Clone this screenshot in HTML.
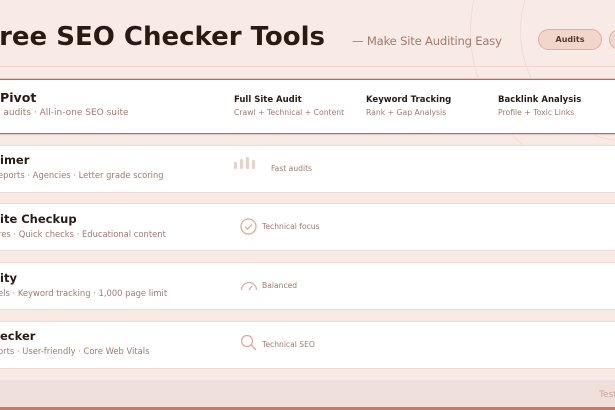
<!DOCTYPE html>
<html><head><style>
body{margin:0;width:615px;height:410px;overflow:hidden;background:#f8ebe6;font-family:"DejaVu Sans","Liberation Sans",sans-serif;position:relative}
.a{position:absolute;white-space:nowrap}
.card{position:absolute;left:-10px;width:640px;background:#fff;border-top:1px solid #efd9d2;border-bottom:1px solid #efd9d2}
.t{font-size:11.5px;font-weight:bold;color:#2a1a14}
.s{font-size:8.4px;color:#a07a6e}
.ct{font-size:8.5px;font-weight:bold;color:#2a1a14}
.cs{font-size:7.7px;color:#a07a6e}
.ic{font-size:7.6px;color:#a07a6e}
</style></head><body>
<div class="a" style="left:470px;top:-120px;width:300px;height:300px;border:1px solid #f0dcd4;border-radius:50%"></div>
<div class="a" style="left:520px;top:-80px;width:220px;height:220px;border:1px solid #f0dcd4;border-radius:50%"></div>
<div class="a" style="left:0;top:66px;width:615px;height:1px;background:#f0d8d0"></div>
<div class="a" style="left:-17px;top:22px;font-size:26px;font-weight:bold;color:#2a1a14">Free SEO Checker Tools</div>
<div class="a" style="left:352px;top:34px;font-size:11.6px;color:#a07a6e;letter-spacing:-0.2px">— Make Site Auditing Easy</div>
<div class="a" style="left:538px;top:29px;width:64px;height:21px;background:#f2d6cc;border:1px solid #dcb0a4;border-radius:11px;box-sizing:border-box;font-size:8px;font-weight:bold;color:#5a3a30;text-align:center;line-height:19px">Audits</div>
<div class="a" style="left:609px;top:29px;width:30px;height:21px;background:#f2d6cc;border:1px solid #dcb0a4;border-radius:11px;box-sizing:border-box"></div>

<div class="a" style="left:0;top:79px;width:615px;height:55px;background:#fff;border-top:1px solid #dd5a4c;border-bottom:1px solid #dd5a4c;box-shadow:0 1px 0 #f2c4bc,0 -1px 0 #f2c4bc;box-sizing:border-box"></div>
<div class="a t" style="left:0;top:90px;font-size:12.6px">Pivot</div>
<div class="a s" style="left:-2px;top:108px;font-size:9px">l audits · All-in-one SEO suite</div>
<div class="a ct" style="left:234px;top:95px">Full Site Audit</div>
<div class="a cs" style="left:234px;top:108px">Crawl + Technical + Content</div>
<div class="a ct" style="left:366px;top:95px">Keyword Tracking</div>
<div class="a cs" style="left:366px;top:108px">Rank + Gap Analysis</div>
<div class="a ct" style="left:498px;top:95px">Backlink Analysis</div>
<div class="a cs" style="left:498px;top:108px">Profile + Toxic Links</div>

<div class="card" style="top:145px;height:46px"></div>
<div class="a t" style="left:0;top:153px">imer</div>
<div class="a s" style="left:-2px;top:170px">eports · Agencies · Letter grade scoring</div>
<svg class="a" style="left:234px;top:156px" width="28" height="16"><g fill="#ead0c8"><rect x="0" y="6" width="3" height="7" rx="1"/><rect x="6" y="3" width="3" height="10" rx="1"/><rect x="12" y="1" width="3" height="12" rx="1"/><rect x="18" y="4" width="3" height="9" rx="1"/></g></svg>
<div class="a ic" style="left:271px;top:164px">Fast audits</div>

<div class="card" style="top:203px;height:46px"></div>
<div class="a t" style="left:0;top:212px">ite Checkup</div>
<div class="a s" style="left:-2px;top:229px">res · Quick checks · Educational content</div>
<svg class="a" style="left:240px;top:218px" width="18" height="18"><circle cx="8.5" cy="8.5" r="7.5" fill="none" stroke="#dca898" stroke-width="1.2"/><path d="M5 8.7l2.5 2.5 4.5-5" fill="none" stroke="#dca898" stroke-width="1.2"/></svg>
<div class="a ic" style="left:262px;top:222px">Technical focus</div>

<div class="card" style="top:262px;height:46px"></div>
<div class="a t" style="left:0;top:271px">ity</div>
<div class="a s" style="left:-2px;top:288px">els · Keyword tracking · 1,000 page limit</div>
<svg class="a" style="left:240px;top:281px" width="18" height="10"><path d="M1.5 9A7.5 7.5 0 0 1 16.5 9" fill="none" stroke="#dca898" stroke-width="1.2"/><path d="M9 9l3-4" stroke="#dca898" stroke-width="1.2"/></svg>
<div class="a ic" style="left:262px;top:281px">Balanced</div>

<div class="card" style="top:321px;height:46px"></div>
<div class="a t" style="left:0;top:329px">ecker</div>
<div class="a s" style="left:-2px;top:346px">orts · User-friendly · Core Web Vitals</div>
<svg class="a" style="left:240px;top:334px" width="18" height="18"><circle cx="7" cy="7" r="5.5" fill="none" stroke="#dca898" stroke-width="1.2"/><path d="M11 11l5 5" stroke="#dca898" stroke-width="1.3"/></svg>
<div class="a ic" style="left:262px;top:340px">Technical SEO</div>

<div class="a" style="left:0;top:380px;width:615px;height:27px;background:#efe0dc"></div>
<div class="a" style="left:599px;top:390px;font-size:9px;color:#c4a69c">Test</div>
<div class="a" style="left:0;top:407px;width:615px;height:3px;background:#dd7060"></div>
</body></html>
